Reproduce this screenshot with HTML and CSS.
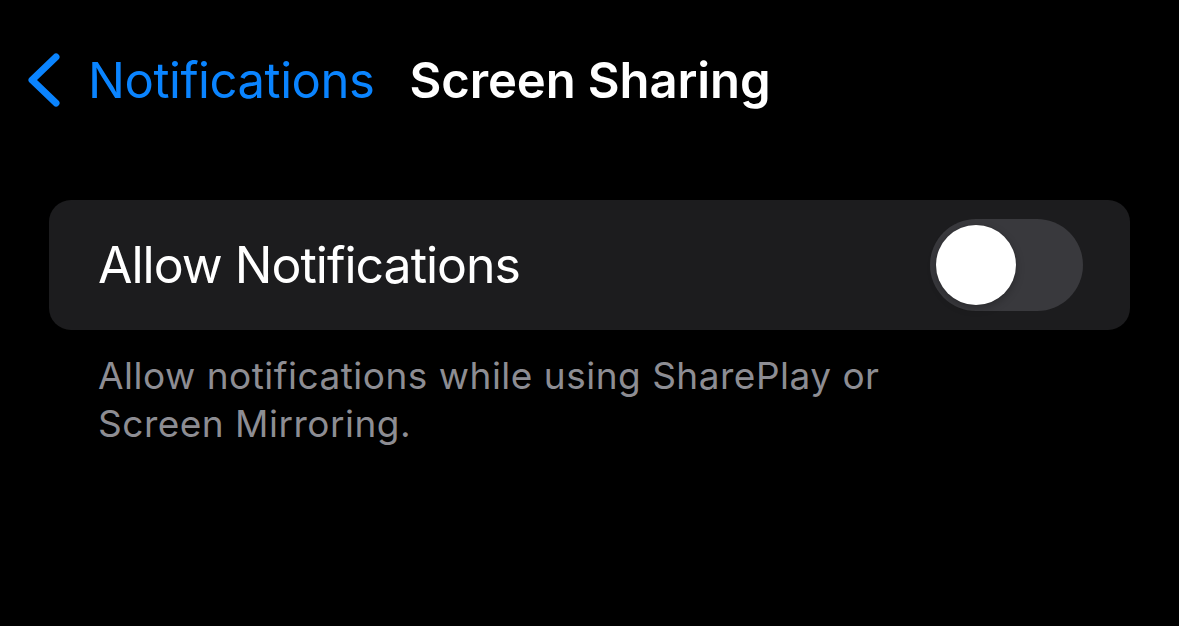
FILE: index.html
```html
<!DOCTYPE html>
<html lang="en">
<head>
  <meta charset="UTF-8" />
  <title>Screen Sharing</title>
  <link rel="stylesheet" href="styles.css">
</head>
<body>
  <header class="nav">
    <a class="back" href="#">
      <svg class="chevron" width="34" height="54" viewBox="0 0 34 54">
        <path d="M29 4 L5 27 L29 50" fill="none" stroke="#0a84ff" stroke-width="7" stroke-linecap="round" stroke-linejoin="round"/>
      </svg>
      <span class="back-label">Notifications</span>
    </a>
    <h1 class="title">Screen Sharing</h1>
  </header>

  <main>
    <!-- single switch row -->
    <section class="card">
      <div class="row">
        <span class="row-label">Allow Notifications</span>
        <div class="switch">
          <div class="knob"></div>
        </div>
      </div>
    </section>
    <p class="footnote">Allow notifications while using SharePlay or<br>Screen Mirroring.</p>
  </main>
</body>
</html>
```

FILE: styles.css
```css
* {
  box-sizing: border-box;
  margin: 0;
  padding: 0;
}

body {
  background: #000;
  color: #fff;
  font-family: Inter, "Noto Sans", sans-serif;
  width: 1179px;
  height: 626px;
  overflow: hidden;
}

/* Navigation bar */
.nav {
  display: flex;
  align-items: center;
  height: 160px;
  padding: 0 0 0 27px;
}

.back {
  display: flex;
  align-items: center;
  gap: 27px;
  text-decoration: none;
  color: #0a84ff;
}

.back-label {
  font-size: 49px;
  letter-spacing: -0.45px;
}

.title {
  margin-left: 35px;
  font-size: 49px;
  font-weight: 600;
  letter-spacing: -0.1px;
}

/* Grouped card */
.card {
  margin: 40px 49px 0;
  background: #1c1c1e;
  border-radius: 22px;
}

.row {
  display: flex;
  align-items: center;
  justify-content: space-between;
  height: 130px;
  padding: 0 47px 0 49px;
}

.row-label {
  font-size: 50px;
  letter-spacing: -1px;
}

.switch {
  width: 153px;
  height: 92px;
  border-radius: 46px;
  background: #39393d;
  padding: 6px;
  display: flex;
  align-items: center;
}

.knob {
  width: 80px;
  height: 80px;
  border-radius: 50%;
  background: #fff;
  box-shadow: 0 3px 8px rgba(0, 0, 0, 0.25), 0 0 0 1px rgba(0, 0, 0, 0.04);
}

.footnote {
  margin: 22px 0 0 98px;
  font-size: 37px;
  line-height: 48px;
  color: #8d8d93;
  letter-spacing: 0.5px;
}
```
